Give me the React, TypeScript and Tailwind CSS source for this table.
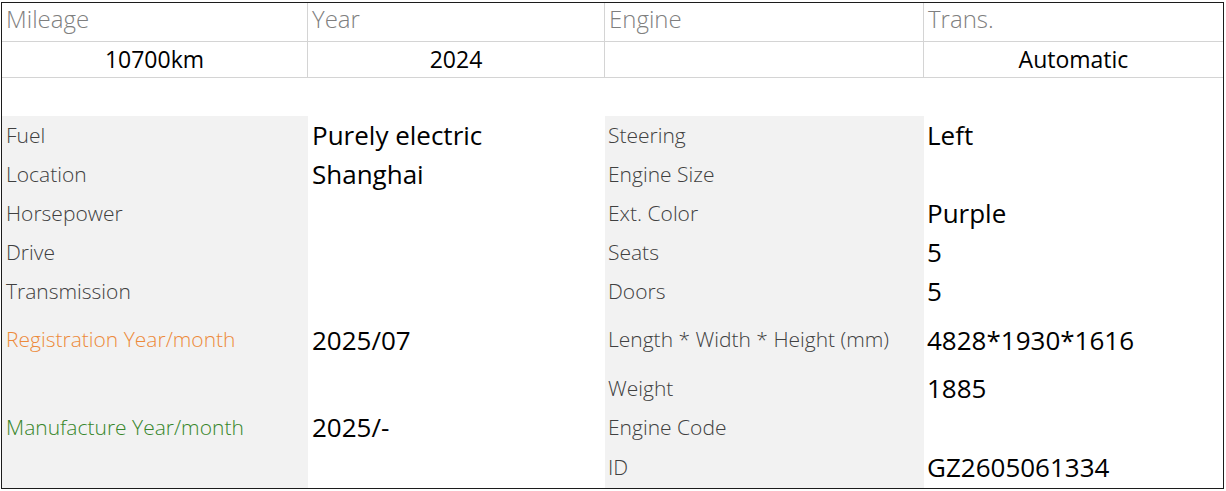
import React from "react";

const F = { fontFamily: '"Open Sans", "Noto Sans", sans-serif' };

type Row = {
  l1: string;
  l1c?: string;
  v1: string;
  l2: string;
  v2: string;
  h: string;
};

const rows: Row[] = [
  { l1: "Fuel", v1: "Purely electric", l2: "Steering", v2: "Left", h: "h-[39px]" },
  { l1: "Location", v1: "Shanghai", l2: "Engine Size", v2: "", h: "h-[39px]" },
  { l1: "Horsepower", v1: "", l2: "Ext. Color", v2: "Purple", h: "h-[39px]" },
  { l1: "Drive", v1: "", l2: "Seats", v2: "5", h: "h-[39px]" },
  { l1: "Transmission", v1: "", l2: "Doors", v2: "5", h: "h-[39px]" },
  { l1: "Registration Year/month", l1c: "text-[#ed8a3a]", v1: "2025/07", l2: "Length * Width * Height (mm)", v2: "4828*1930*1616", h: "h-[58px]" },
  { l1: "", v1: "", l2: "Weight", v2: "1885", h: "h-[39px]" },
  { l1: "Manufacture Year/month", l1c: "text-[#37862a]", v1: "2025/-", l2: "Engine Code", v2: "", h: "h-[39px]" },
  { l1: "", v1: "", l2: "ID", v2: "GZ2605061334", h: "flex-1" },
];

export default function App() {
  return (
    <div className="w-[1226px] h-[491px] bg-white pt-[2px] pl-[1px]" style={F}>
      <div className="w-[1223px] h-[487px] border border-[#1c1c1c] flex flex-col">
        <div className="grid grid-cols-[306px_297px_319px_1fr] h-[39px]">
          {["Mileage", "Year", "Engine", "Trans."].map((t, i) => (
            <div
              key={t}
              className={`border-b border-[#d4d4d4] ${i < 3 ? "border-r" : ""} pl-[4px] text-[24px] font-light text-[#7f7f7f] leading-[32px]`}
            >
              {t}
            </div>
          ))}
        </div>
        <div className="grid grid-cols-[306px_297px_319px_1fr] h-[36px]">
          {["10700km", "2024", "", "Automatic"].map((t, i) => (
            <div
              key={i}
              className={`border-b border-[#d4d4d4] ${i < 3 ? "border-r" : ""} text-center text-[23px] text-black leading-[34px]`}
            >
              {t}
            </div>
          ))}
        </div>
        <div className="h-[38px]" />
        <div className="flex-1 flex flex-col">
          {rows.map((r, i) => (
            <div key={i} className={`grid grid-cols-[306px_297px_319px_1fr] ${r.h}`}>
              <div className={`bg-[#f2f2f2] flex items-center pl-[4px] text-[21px] font-light ${r.l1c ?? "text-[#404040]"}`}>
                {r.l1}
              </div>
              <div className="flex items-center pl-[4px] text-[26px] text-black">{r.v1}</div>
              <div className="bg-[#f2f2f2] flex items-center pl-[3px] text-[21px] font-light text-[#404040]">
                {r.l2}
              </div>
              <div className="flex items-center pl-[3px] text-[26px] text-black">{r.v2}</div>
            </div>
          ))}
        </div>
      </div>
    </div>
  );
}
